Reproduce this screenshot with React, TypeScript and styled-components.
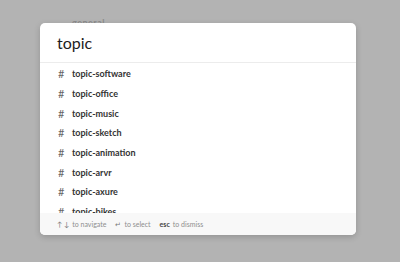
import React from 'react'
import styled, { createGlobalStyle } from 'styled-components'

const GlobalStyle = createGlobalStyle`
  html, body {
    margin: 0;
    padding: 0;
    background: #b3b3b3;
    font-family: Lato, 'Liberation Sans', sans-serif;
  }
`

const Page = styled.div`
  position: relative;
  width: 400px;
  height: 262px;
  overflow: hidden;
  background: #b3b3b3;
`

const BehindText = styled.div`
  padding: 17px 0 0 72px;
  font-size: 9px;
  font-weight: 700;
  letter-spacing: 0.5px;
  color: #8c8c8c;
`

const Modal = styled.div`
  position: absolute;
  left: 40px;
  top: 23px;
  width: 316px;
  height: 212px;
  background: #fff;
  border-radius: 5px;
  box-shadow: 0 2px 6px rgba(0, 0, 0, 0.18);
  display: flex;
  flex-direction: column;
  overflow: hidden;
`

const Header = styled.div`
  height: 39px;
  display: flex;
  align-items: center;
  padding-left: 17px;
  border-bottom: 1px solid #ececec;
  font-size: 16px;
  color: #1d1c1d;
  flex-shrink: 0;
`

const List = styled.div`
  flex: 1;
  overflow: hidden;
  padding-top: 1px;
`

const Row = styled.div`
  height: 19.7px;
  display: flex;
  align-items: center;
  padding-left: 18px;
`

const Hash = styled.span`
  width: 14px;
  font-size: 11px;
  color: #666;
`

const Name = styled.span`
  font-size: 9px;
  font-weight: 700;
  color: #333;
`

const Footer = styled.div`
  height: 22px;
  flex-shrink: 0;
  background: #f8f8f8;
  display: flex;
  align-items: center;
  padding-left: 17px;
  gap: 9px;
  font-size: 7px;
  color: #8e8e8e;
`

const Hint = styled.span`
  display: flex;
  align-items: center;
  gap: 3px;
`

const Key = styled.span<{ $strong?: boolean }>`
  color: ${(p) => (p.$strong ? '#444' : '#777')};
  font-weight: ${(p) => (p.$strong ? 700 : 400)};
`

const channels = [
  'topic-software',
  'topic-office',
  'topic-music',
  'topic-sketch',
  'topic-animation',
  'topic-arvr',
  'topic-axure',
  'topic-bikes',
  'topic-books',
]

const App: React.FC = () => {
  return (
    <Page>
      <GlobalStyle />
      <BehindText>general</BehindText>
      <Modal>
        <Header>topic</Header>
        <List>
          {channels.map((c) => (
            <Row key={c}>
              <Hash>#</Hash>
              <Name>{c}</Name>
            </Row>
          ))}
        </List>
        <Footer>
          <Hint>
            <Key>↑ ↓</Key> to navigate
          </Hint>
          <Hint>
            <Key>↵</Key> to select
          </Hint>
          <Hint>
            <Key $strong>esc</Key> to dismiss
          </Hint>
        </Footer>
      </Modal>
    </Page>
  )
}

export default App
